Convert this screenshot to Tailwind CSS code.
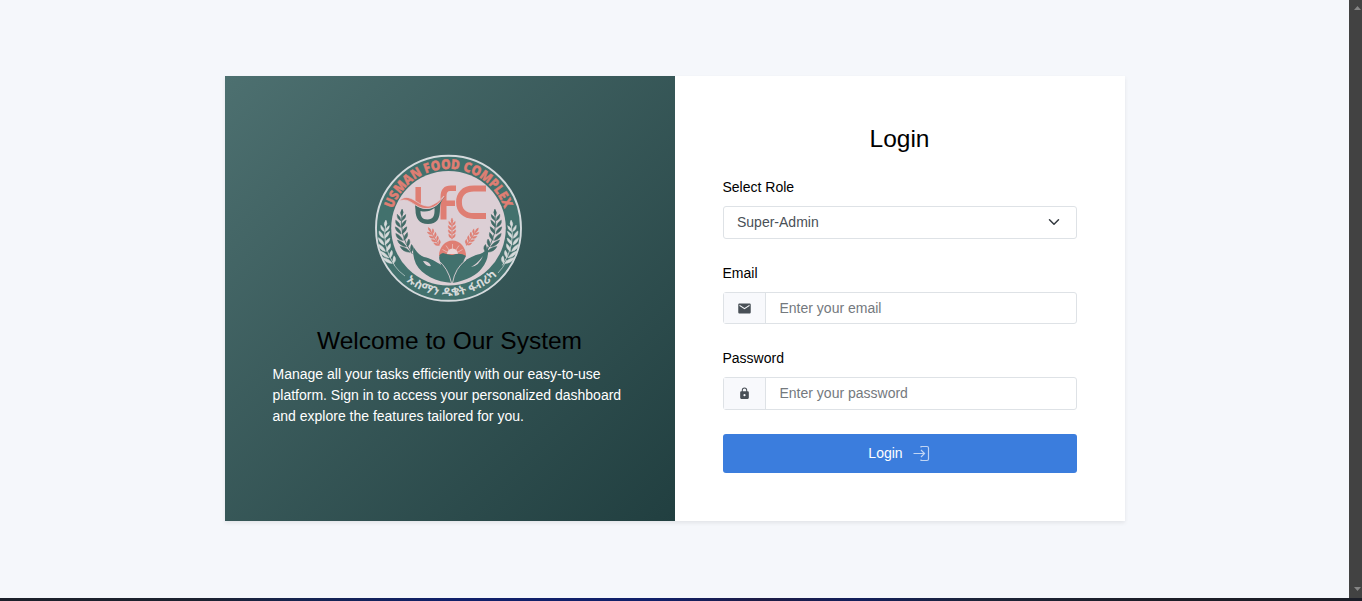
<!DOCTYPE html>
<html lang="en">
<head>
<meta charset="utf-8">
<title>Login</title>
<script src="https://cdn.jsdelivr.net/npm/@tailwindcss/browser@4"></script>
</head>
<body class="flex h-[601px] flex-col overflow-hidden bg-[#f5f7fb] font-['Liberation_Sans',Arial,sans-serif] text-sm text-black">
<div class="flex h-[598px] shrink-0">
  <main class="flex flex-1 items-start justify-center pt-[76px]">
    <div class="grid h-[445px] w-[900px] grid-cols-2 bg-white shadow-[0_2px_4px_rgba(0,0,0,0.08)]">
      <section class="flex flex-col items-center bg-linear-135 from-[#4d7070] to-[#213f40] px-12 pt-[78px]">
        <svg class="mr-[2px] h-[150px] w-[150px] shrink-0" viewBox="374 154 150 150" fill="none">
          <defs>
            <path id="topArc" d="M389.5 228A59 59 0 0 1 507.5 228"/>
            <path id="bottomArc" d="M380.5 228A68 68 0 0 0 516.5 228"/>
            <g id="ear">
              <path d="M0 12V-9" stroke="currentColor" stroke-width="1.200"/>
              <path fill="currentColor" stroke="currentColor" stroke-width=".5" d="M0-13Q2.2-10 0-7Q-2.2-10 0-13M-.4-4Q-4.4-5-3.8-9Q-.8-7.500-.4-4M.4-4Q4.400-5 3.800-9Q.8-7.500.4-4M-.4 1Q-4.900 0-4.300-4Q-.8-2.500-.4 1M.4 1Q4.900 0 4.300-4Q.8-2.500.4 1M-.4 6Q-4.900 5-4.300 1Q-.8 2.500-.4 6M.4 6Q4.900 5 4.300 1Q.8 2.500.4 6M-.4 11Q-4.400 10-3.800 6Q-.8 7.500-.4 11M.4 11Q4.400 10 3.800 6Q.8 7.500.4 11"/>
            </g>
            <g id="longEar">
              <path d="M2 -21Q-4 2 8 24" stroke="currentColor" stroke-width=".8"/>
              <path fill="currentColor" stroke="currentColor" stroke-width=".5" d="M2-24Q4-20 1-17Q-1-20 2-24M0-12Q-4-14-3-19Q0-16 0-12M1-12Q5-14 5-18Q1-16 1-12M-1-5Q-6-8-5-13Q-1-10-1-5M0-5Q4-7 5-12Q0-10 0-5M-1 2Q-6-1-6-6Q-1-3-1 2M0 2Q5-1 5-5Q0-3 0 2M0 9Q-6 7-6 1Q-1 4 0 9M1 9Q6 6 5 1Q1 4 1 9M3 16Q-4 14-5 8Q1 11 3 16M4 16Q8 12 6 8Q3 11 4 16M6 22Q-1 21-3 15Q4 17 6 22M7 22Q11 18 8 14Q6 17 7 22"/>
            </g>
          </defs>
          <circle cx="448.500" cy="228.300" r="72.500" fill="#42716d" stroke="#d5dadd" stroke-width="1.900"/>
          <circle cx="448.500" cy="228.300" r="57.300" fill="#dccfd5"/>
          <text fill="#df7e73" stroke="#df7e73" stroke-width=".4" font-family="Open Sans, sans-serif" font-weight="800" font-size="13.500"><textPath href="#topArc" startOffset="50%" text-anchor="middle" textLength="146" lengthAdjust="spacingAndGlyphs">USMAN FOOD COMPLEX</textPath></text>
          <text fill="#d6dada" font-family="Noto Sans Ethiopic, Abyssinica SIL, Noto Sans, sans-serif" font-weight="700" font-size="11.500"><textPath href="#bottomArc" startOffset="52%" text-anchor="middle" textLength="100" lengthAdjust="spacingAndGlyphs">ኡስማን ዱቄት ፋብሪካ</textPath></text>
          <path d="M394 265Q399 272 405 276M498 273Q503 268 507 260" stroke="#b9c8c8" stroke-width=".8"/>
          <g color="#d6dada">
            <use href="#longEar" transform="translate(385 243) rotate(-3) scale(1.050 .95)"/>
            <use href="#longEar" transform="translate(512 243) rotate(3) scale(-1.050 .95)"/>
          </g>
          <g color="#426b67">
            <use href="#longEar" transform="translate(402 232) rotate(-5) scale(1.050 .95)"/>
            <use href="#longEar" transform="translate(495 232) rotate(5) scale(-1.050 .95)"/>
          </g>
          <path d="M418.200 187V204" stroke="#df7e73" stroke-width="5.500"/>
          <path d="M440.500 219.500V197Q440.500 185.500 451 185.500H456V191H450Q446.500 191 446.500 196V200.500H455V206H446.500V219.500Z" fill="#df7e73"/>
          <path d="M486 188.500H474C463 188.500 459 195 459 202C459 210 464 216 474 216H486" stroke="#df7e73" stroke-width="5.800"/>
          <path d="M415 205Q427 213 437 205Q441 200 446 196Q440 201 440 208C440 219 437 224 428 224C419 224 415.500 218 415.500 210Z" fill="#426b67"/>
          <path d="M420.500 211Q428 213 434.500 208C435 216 433 219.500 427.500 219.500C422 219.500 420.500 216 420.500 211" fill="#dccfd5"/>
          <path d="M399 201C410 190 418 208 430 206Q438 203 444 196C438 207 430 210 422 208C412 205 409 197 399 201" fill="#df7e73" stroke="#dccfd5" stroke-width=".7"/>
          <g color="#df7e73">
            <use href="#ear" transform="translate(452 229) scale(.85)"/>
            <use href="#ear" transform="translate(434 237) rotate(-31) scale(.85)"/>
            <use href="#ear" transform="translate(472 237) rotate(35) scale(.85)"/>
          </g>
          <path d="M439 256A13.500 15.500 0 0 1 466 256Z" fill="#df7e73"/>
          <path d="M447 254A5.500 5.500 0 0 1 458 254Z" fill="#e9d5d6"/>
          <path d="M452.500 249V244M449 250L446 245.500M456 250L459 245.500M447 252L442.500 249.500M458 252L462.500 249.500" stroke="#e9d5d6" stroke-width=".6"/>
          <path d="M413.500 247C416 251 419 255 424 257C430 258 437 262 441 265L439.500 260Q438 254 443 253Q450 255 453 255Q460 252 466 256L463 262C468 258 475 255 480 254Q486 252 487.500 246Q490 258 482 268Q474 279 452.500 283C436 282 422 275 416 264Q412 255 413.500 247Z" fill="#42716d"/>
          <path d="M423 261Q429 261 431 266Q426 267 423 261M483 256Q479 266 471 267Q477 264 483 256" fill="#dccfd5"/>
          <path d="M438 260Q448 268 451.500 283M466 260Q455 268 452.500 283" stroke="#dccfd5" stroke-width=".9"/>
        </svg>
        <h1 class="mt-[21px] whitespace-nowrap text-[24.5px] leading-[31px]">Welcome to Our System</h1>
        <p class="mt-2 w-full whitespace-nowrap leading-[21px] text-white">Manage all your tasks efficiently with our easy-to-use<br>platform. Sign in to access your personalized dashboard<br>and explore the features tailored for you.</p>
      </section>
      <section class="flex flex-col px-12 pt-12">
        <h2 class="text-center text-[24.5px] leading-[29px]">Login</h2>
        <form class="flex flex-col">
          <label class="mt-6 leading-[21px]">Select Role</label>
          <div class="mt-[8px] flex h-[33px] items-center justify-between rounded-[3px] border border-[#dee2e6] pr-4 pl-[13.500px] text-[#495057]">
            <span class="pb-[2px]">Super-Admin</span>
            <svg class="mb-[2px] h-3 w-3" viewBox="0 0 16 16" fill="none" stroke="#343a40" stroke-width="2" stroke-linecap="round" stroke-linejoin="round"><path d="m2 5 6 6 6-6"/></svg>
          </div>
          <label class="mt-6 leading-[21px]">Email</label>
          <div class="mt-[8px] flex h-8 rounded-[3px] border border-[#dee2e6]">
            <span class="flex w-[42px] items-center justify-center border-r border-[#dee2e6] bg-[#f8f9fc]">
              <svg class="h-[15px] w-[15px]" viewBox="0 0 24 24" fill="#495057"><path d="M20 4H4c-1.100 0-2 .9-2 2v12c0 1.100.9 2 2 2h16c1.100 0 2-.9 2-2V6c0-1.100-.9-2-2-2m0 4-8 5-8-5V6l8 5 8-5z"/></svg>
            </span>
            <input class="min-w-0 flex-1 px-[14px] placeholder:text-[#74797e]" placeholder="Enter your email">
          </div>
          <label class="mt-6 leading-[21px]">Password</label>
          <div class="mt-[8px] flex h-[33px] rounded-[3px] border border-[#dee2e6]">
            <span class="flex w-[42px] items-center justify-center border-r border-[#dee2e6] bg-[#f8f9fc]">
              <svg class="h-[13px] w-[13px]" viewBox="0 0 24 24" fill="#495057"><path d="M18 8h-1V6A5 5 0 0 0 7 6v2H6a2 2 0 0 0-2 2v10a2 2 0 0 0 2 2h12a2 2 0 0 0 2-2V10a2 2 0 0 0-2-2m-6 9a2 2 0 1 1 0-4 2 2 0 0 1 0 4M8.900 8V6a3.100 3.100 0 0 1 6.200 0v2z"/></svg>
            </span>
            <input class="min-w-0 flex-1 px-[14px] pb-[2px] placeholder:text-[#74797e]" placeholder="Enter your password">
          </div>
          <button type="button" class="mt-6 flex h-[39px] items-center justify-center gap-[10px] rounded-[3px] bg-[#3b7ddd] pr-px text-white">
            <span class="pb-[2px]">Login</span>
            <svg class="h-[17px] w-[17px]" viewBox="0 0 17 17" fill="none" stroke="#fff" stroke-opacity=".68" stroke-width="1.200"><path d="M8 2.500V1.500H14Q15.500 1.500 15.500 3V14Q15.500 15.500 14 15.500H8V14.500M.5 8.500H11.500M8 5 11.500 8.500 8 12"/></svg>
          </button>
        </form>
      </section>
    </div>
  </main>
  <div class="flex w-[13px] flex-col items-end justify-between bg-[#424242] pt-[6px] pr-[1px] pb-[7px]">
    <svg class="h-1 w-[7px]" viewBox="0 0 7 4" fill="#858585"><path d="M0 4 3.500 0 7 4z"/></svg>
    <svg class="h-1 w-[7px]" viewBox="0 0 7 4" fill="#858585"><path d="M0 0 3.500 4 7 0z"/></svg>
  </div>
</div>
<div class="h-[3px] shrink-0 bg-[linear-gradient(90deg,#1c202a_0%,#1c2230_15%,#152450_22%,#10206a_33%,#10206a_48%,#1d1c45_56%,#121f5c_63%,#1c2438_72%,#1c1e28_85%,#1c1e28_100%)]"></div>
</body>
</html>
